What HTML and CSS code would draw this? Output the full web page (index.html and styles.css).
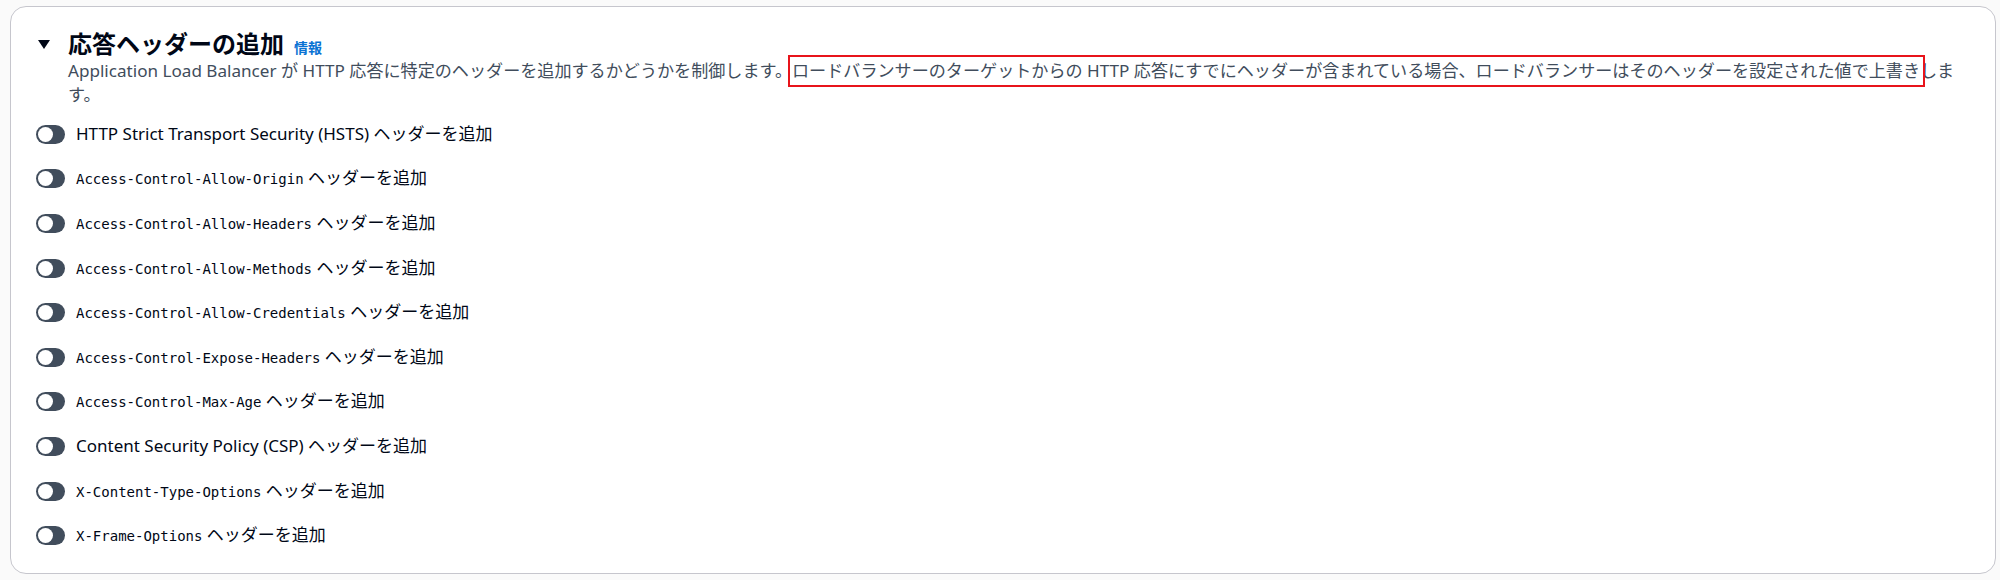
FILE: index.html
```html
<!DOCTYPE html>
<html lang="ja">
<head>
  <meta charset="UTF-8">
  <meta name="viewport" content="width=device-width, initial-scale=1.0">
  <title>応答ヘッダーの追加</title>
  <link rel="stylesheet" href="styles.css">
</head>

<body>
  <div class="card">
    <div class="header">
      <span class="caret">
        <svg width="12" height="9" viewBox="0 0 12 9"><polygon points="0,0 12,0 6,9" fill="#000716"/></svg>
      </span>
      <h2>応答ヘッダーの追加</h2>
      <a class="info" href="#">情報</a>
    </div>
    <p class="description">
      Application Load Balancer が HTTP 応答に特定のヘッダーを追加するかどうかを制御します。<span class="marked">ロードバランサーのターゲットからの HTTP 応答にすでにヘッダーが含まれている場合、ロードバランサーはそのヘッダーを設定された値で上書き</span>します。
    </p>

    <div class="toggles">
      <label class="row"><span class="toggle"></span><span class="label">HTTP Strict Transport Security (HSTS) ヘッダーを追加</span></label>
      <label class="row"><span class="toggle"></span><span class="label"><code>Access-Control-Allow-Origin</code> ヘッダーを追加</span></label>
      <label class="row"><span class="toggle"></span><span class="label"><code>Access-Control-Allow-Headers</code> ヘッダーを追加</span></label>
      <label class="row"><span class="toggle"></span><span class="label"><code>Access-Control-Allow-Methods</code> ヘッダーを追加</span></label>
      <label class="row"><span class="toggle"></span><span class="label"><code>Access-Control-Allow-Credentials</code> ヘッダーを追加</span></label>
      <label class="row"><span class="toggle"></span><span class="label"><code>Access-Control-Expose-Headers</code> ヘッダーを追加</span></label>
      <label class="row"><span class="toggle"></span><span class="label"><code>Access-Control-Max-Age</code> ヘッダーを追加</span></label>
      <label class="row"><span class="toggle"></span><span class="label">Content Security Policy (CSP) ヘッダーを追加</span></label>
      <label class="row"><span class="toggle"></span><span class="label"><code>X-Content-Type-Options</code> ヘッダーを追加</span></label>
      <label class="row"><span class="toggle"></span><span class="label"><code>X-Frame-Options</code> ヘッダーを追加</span></label>
    </div>
  </div>
</body>
</html>
```

FILE: styles.css
```css
html, body {
  margin: 0;
  height: 100%;
}
body {
  font-family: "Noto Sans", "Noto Sans CJK JP", sans-serif;
  background-color: #fafafa;
  color: #000716;
  padding: 6px 4px 6px 10px;
  box-sizing: border-box;
}
.card {
  height: 100%;
  box-sizing: border-box;
  background: #fff;
  border: 1px solid #c6c6cd;
  border-radius: 16px;
  padding: 22px 24px 0 24px;
}
.header {
  display: flex;
  align-items: baseline;
  height: 30px;
}
.caret {
  width: 33px;
  padding-left: 3px;
  box-sizing: border-box;
  align-self: center;
  display: flex;
}
h2 {
  margin: 0;
  font-size: 24px;
  line-height: 30px;
  font-weight: 700;
}
.info {
  margin-left: 10px;
  font-size: 14px;
  font-weight: 700;
  color: #0972d3;
  text-decoration: none;
}
.description {
  margin: 0;
  padding: 0 8px 0 33px;
  font-size: 17.1px;
  line-height: 24px;
  color: #414d5c;
}
.marked {
  position: relative;
}
.marked::after {
  content: "";
  position: absolute;
  top: -4px;
  bottom: -5px;
  left: -4px;
  right: -5px;
  border: 2px solid #e8141b;
}
.toggles {
  margin-top: 5px;
  display: flex;
  flex-direction: column;
}
.row {
  display: flex;
  align-items: center;
  height: 44.6px;
}
.toggle {
  position: relative;
  margin-left: 1px;
  width: 29px;
  height: 19px;
  border-radius: 10px;
  background-color: #414d5c;
  flex-shrink: 0;
}
.toggle::after {
  content: "";
  position: absolute;
  top: 2px;
  left: 2px;
  width: 15px;
  height: 15px;
  border-radius: 50%;
  background: #fff;
}
.label {
  margin-left: 11px;
  font-size: 17px;
  line-height: 24px;
}
code {
  font-family: "DejaVu Sans Mono", monospace;
  font-size: 14px;
}
```
